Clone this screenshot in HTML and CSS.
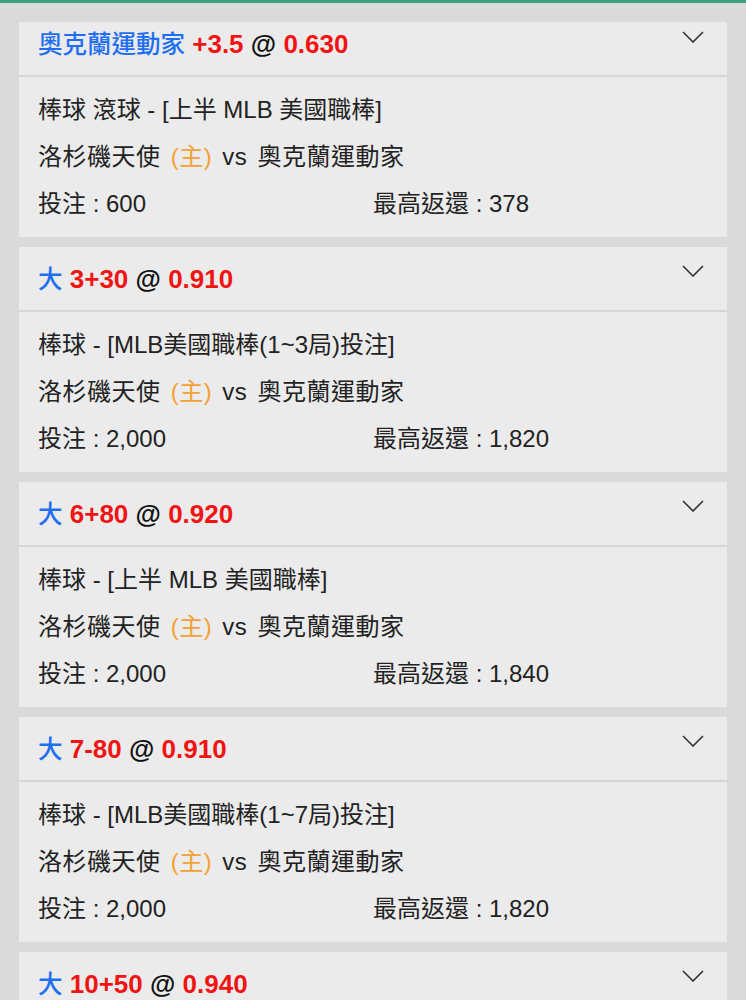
FILE: index.html
```html
<!DOCTYPE html>
<html lang="zh-Hant">
<head>
<meta charset="utf-8">
<title>注單</title>
<link rel="stylesheet" href="styles.css">
</head>
<body>
<div class="topbar"></div>
<div class="list">
  <div class="card">
    <div class="card-head card-head--first">
      <div class="title"><span class="team">奧克蘭運動家</span> <span class="num">+3.5</span> <span class="at">@</span> <span class="num">0.630</span></div>
      <svg class="chev" viewBox="0 0 22 12"><path d="M1 1 L11 11 L21 1"/></svg>
    </div>
    <div class="card-body">
      <div class="row">棒球 滾球 - [上半 MLB 美國職棒]</div>
      <div class="row match">洛杉磯天使 <span class="home">(主)</span> vs 奧克蘭運動家</div>
      <div class="row cols"><span>投注 : 600</span><span>最高返還 : 378</span></div>
    </div>
  </div>

  <div class="card">
    <div class="card-head">
      <div class="title"><span class="team">大</span> <span class="num">3+30</span> <span class="at">@</span> <span class="num">0.910</span></div>
      <svg class="chev" viewBox="0 0 22 12"><path d="M1 1 L11 11 L21 1"/></svg>
    </div>
    <div class="card-body">
      <div class="row">棒球 - [MLB美國職棒(1~3局)投注]</div>
      <div class="row match">洛杉磯天使 <span class="home">(主)</span> vs 奧克蘭運動家</div>
      <div class="row cols"><span>投注 : 2,000</span><span>最高返還 : 1,820</span></div>
    </div>
  </div>

  <div class="card">
    <div class="card-head">
      <div class="title"><span class="team">大</span> <span class="num">6+80</span> <span class="at">@</span> <span class="num">0.920</span></div>
      <svg class="chev" viewBox="0 0 22 12"><path d="M1 1 L11 11 L21 1"/></svg>
    </div>
    <div class="card-body">
      <div class="row">棒球 - [上半 MLB 美國職棒]</div>
      <div class="row match">洛杉磯天使 <span class="home">(主)</span> vs 奧克蘭運動家</div>
      <div class="row cols"><span>投注 : 2,000</span><span>最高返還 : 1,840</span></div>
    </div>
  </div>

  <div class="card">
    <div class="card-head">
      <div class="title"><span class="team">大</span> <span class="num">7-80</span> <span class="at">@</span> <span class="num">0.910</span></div>
      <svg class="chev" viewBox="0 0 22 12"><path d="M1 1 L11 11 L21 1"/></svg>
    </div>
    <div class="card-body">
      <div class="row">棒球 - [MLB美國職棒(1~7局)投注]</div>
      <div class="row match">洛杉磯天使 <span class="home">(主)</span> vs 奧克蘭運動家</div>
      <div class="row cols"><span>投注 : 2,000</span><span>最高返還 : 1,820</span></div>
    </div>
  </div>

  <div class="card">
    <div class="card-head">
      <div class="title"><span class="team">大</span> <span class="num">10+50</span> <span class="at">@</span> <span class="num">0.940</span></div>
      <svg class="chev" viewBox="0 0 22 12"><path d="M1 1 L11 11 L21 1"/></svg>
    </div>
    <div class="card-body">
      <div class="row">棒球 - [MLB美國職棒]</div>
      <div class="row match">洛杉磯天使 <span class="home">(主)</span> vs 奧克蘭運動家</div>
      <div class="row cols"><span>投注 : 2,000</span><span>最高返還 : 1,880</span></div>
    </div>
  </div>
</div>
</body>
</html>
```

FILE: styles.css
```css
html, body {
  margin: 0;
  padding: 0;
}
body {
  background: #dadada;
  font-family: "Liberation Sans", "Noto Sans CJK TC", sans-serif;
  color: #222;
  width: 746px;
  height: 1000px;
  overflow: hidden;
}
.topbar {
  height: 3px;
  background: #3e9f7f;
}
.list {
  display: flex;
  flex-direction: column;
  gap: 10px;
  padding: 19px 19px 0;
}
.card {
  background: #ebebeb;
}
.card-head {
  height: 65px;
  box-sizing: border-box;
  padding: 18px 23px 0 19px;
  display: flex;
  justify-content: space-between;
  align-items: flex-start;
  border-bottom: 2px solid #d6d6d6;
}
.card-head--first {
  height: 55px;
  padding-top: 8px;
}
.card-head--first .chev {
  margin-top: 1px;
}
.title {
  font-size: 26px;
  line-height: 28px;
  white-space: nowrap;
}
.team {
  color: #1f6ff0;
  font-weight: 500;
  font-size: 24.5px;
}
.num {
  color: #f01414;
  font-weight: bold;
}
.at {
  color: #111;
  font-weight: bold;
}
.chev {
  width: 22px;
  height: 12px;
  fill: none;
  stroke: #333;
  stroke-width: 1.6;
}
.card-body {
  padding: 9px 19px 10px;
}
.row {
  font-size: 24px;
  height: 47px;
  line-height: 47px;
  white-space: nowrap;
}
.match {
  letter-spacing: 0.5px;
  word-spacing: 3px;
}
.cols {
  display: grid;
  grid-template-columns: 1fr 1fr;
}
.home {
  color: #f5a033;
}
```
